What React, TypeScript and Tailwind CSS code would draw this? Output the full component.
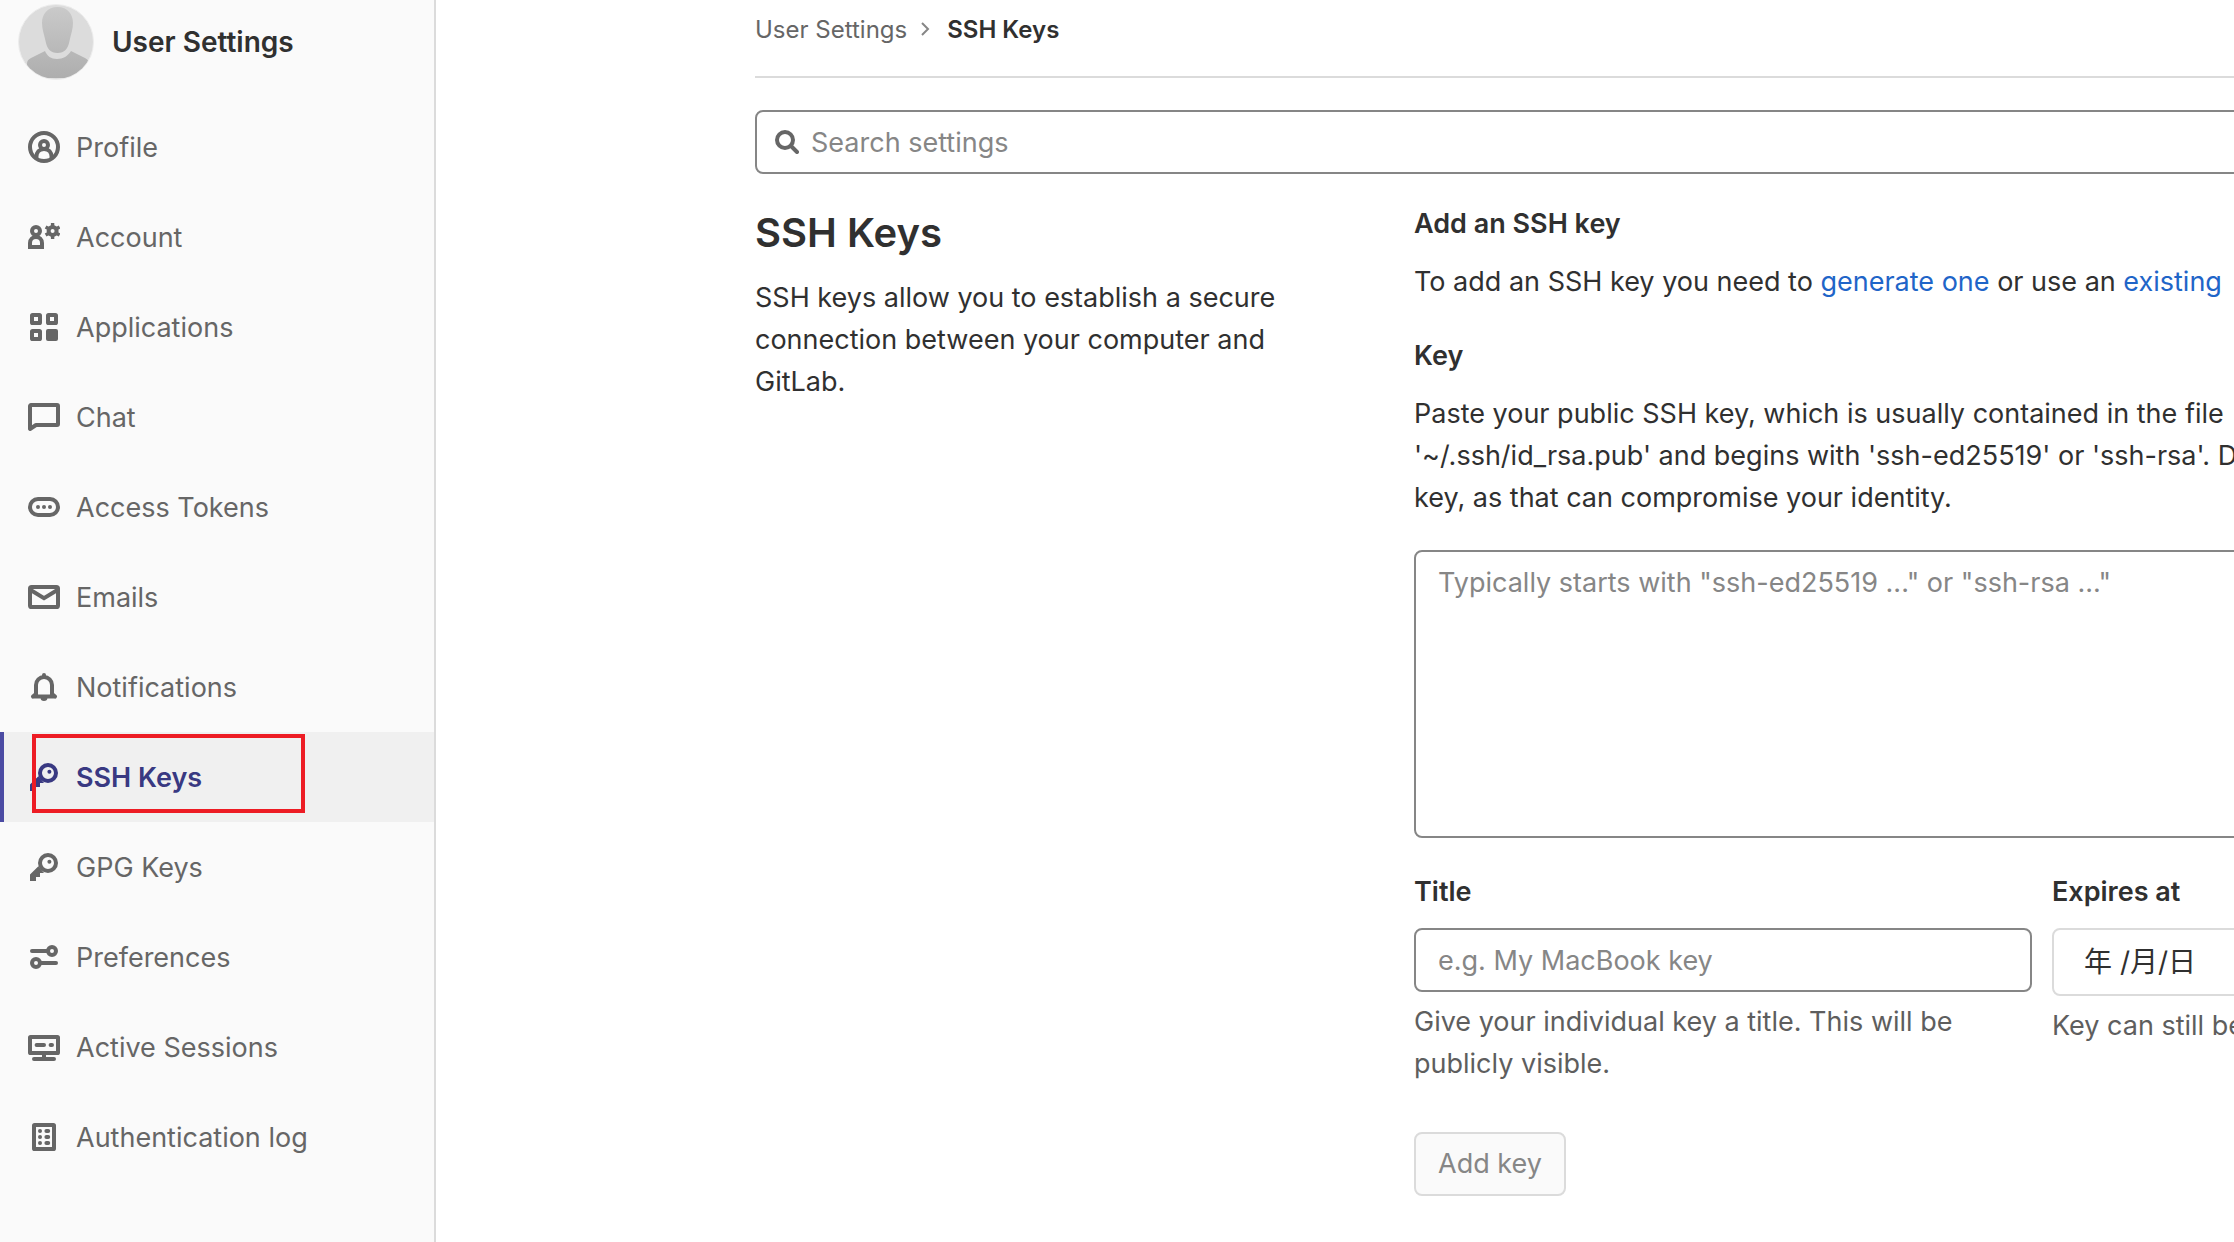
import type { ReactNode } from "react";

function Icon({ children }: { children: ReactNode }) {
  return (
    <svg viewBox="0 0 16 16" className="size-8 shrink-0" fill="none" stroke="currentColor" strokeWidth="2" aria-hidden="true">
      {children}
    </svg>
  );
}

const solid = { fill: "currentColor", stroke: "none" };

const profile = (
  <Icon>
    <circle cx="8" cy="8" r="7" />
    <circle cx="8" cy="7" r="2" />
    <path d="M4.200 13.500V13c0-2.500 1.500-4 3.800-4s3.800 1.500 3.800 4v.5" />
  </Icon>
);

const account = (
  <Icon>
    <circle cx="4" cy="5" r="2" />
    <path d="M1 13v-2a3 3 0 0 1 6 0v2z" />
    <circle cx="12.300" cy="5" r="2" />
    <path
      d="M12.300 1v1.500M12.300 7.500V9M8.800 3l1.400.8M14.400 6.200l1.400.8M8.800 7l1.400-.8M14.400 3.800l1.400-.8"
      strokeWidth="1.700"
    />
  </Icon>
);

const applications = (
  <Icon>
    <rect x="2" y="2" width="4" height="4" rx="0.3" />
    <rect x="10" y="2" width="4" height="4" rx="0.3" />
    <rect x="2" y="10" width="4" height="4" rx="0.3" />
    <rect x="9" y="9" width="6" height="6" rx="1" {...solid} />
  </Icon>
);

const chat = (
  <Icon>
    <path d="M1 14V2.500A.5.5 0 0 1 1.500 2h13a.5.5 0 0 1 .5.5v9a.5.5 0 0 1-.5.5H4z" strokeLinejoin="round" />
  </Icon>
);

const token = (
  <Icon>
    <rect x="1" y="4" width="14" height="8" rx="4" />
    <circle cx="5" cy="8" r="1" {...solid} />
    <circle cx="8" cy="8" r="1" {...solid} />
    <circle cx="11" cy="8" r="1" {...solid} />
  </Icon>
);

const mail = (
  <Icon>
    <rect x="1" y="3" width="14" height="10" rx="0.8" />
    <path d="M1.500 4.600 8 8.600l6.500-4" />
  </Icon>
);

const bell = (
  <Icon>
    <path d="M4 12V7a4 4 0 0 1 8 0v5" />
    <path d="M2.500 12.800 4 11.500M13.500 12.800 12 11.500M2.500 12.800h11" strokeLinecap="round" />
    <path d="M7 2.500V2a1 1 0 0 1 2 0v.5zM6.300 13.500h3.400a1.700 1.500 0 0 1-3.400 0z" {...solid} />
  </Icon>
);

const keyIcon = (
  <Icon>
    <circle cx="10" cy="6" r="4" />
    <circle cx="10.700" cy="5.400" r="1" {...solid} />
    <path d="M1 15h3v-2h2v-2h2L5.200 7.600 1 11.800z" {...solid} />
  </Icon>
);

const preferences = (
  <Icon>
    <circle cx="12" cy="5" r="2" />
    <circle cx="4" cy="11" r="2" />
    <path d="M2 5h8M6 11h8" strokeLinecap="round" />
  </Icon>
);

const sessions = (
  <Icon>
    <rect x="1" y="3" width="14" height="8" rx="0.3" />
    <path d="M4.300 7H8M11.300 7h.7M3 14h10" strokeLinecap="round" />
    <path d="M8 11v3" />
  </Icon>
);

const log = (
  <Icon>
    <rect x="3" y="2" width="10" height="12" rx="0.3" />
    <path d="M6 5h.01M6 8h.01M6 11h.01M9.200 5h.9M9.200 8h.9M9.200 11h.9" strokeLinecap="round" />
  </Icon>
);

const items: { label: string; icon: ReactNode; active?: boolean }[] = [
  { label: "Profile", icon: profile },
  { label: "Account", icon: account },
  { label: "Applications", icon: applications },
  { label: "Chat", icon: chat },
  { label: "Access Tokens", icon: token },
  { label: "Emails", icon: mail },
  { label: "Notifications", icon: bell },
  { label: "SSH Keys", icon: keyIcon, active: true },
  { label: "GPG Keys", icon: keyIcon },
  { label: "Preferences", icon: preferences },
  { label: "Active Sessions", icon: sessions },
  { label: "Authentication log", icon: log },
];

function Avatar() {
  return (
    <svg viewBox="0 0 76 76" className="size-[76px] shrink-0" role="img" aria-label="User avatar">
      <defs>
        <linearGradient id="figure" x1="0" y1="0" x2="0" y2="76" gradientUnits="userSpaceOnUse">
          <stop offset="0" stopColor="#cbcbcb" />
          <stop offset="1" stopColor="#adadad" />
        </linearGradient>
        <clipPath id="disc">
          <circle cx="38" cy="38" r="37" />
        </clipPath>
      </defs>
      <circle cx="38" cy="38" r="37.500" fill="#dcdcdc" stroke="#ededed" />
      <g clipPath="url(#disc)" fill="url(#figure)">
        <path d="M39.500 3c10 0 15.500 7 15.500 16 0 6-2 11-3.500 18C50 45 46.500 49 39.500 49S29 45 27.500 37C26 30 24 25 24 19c0-9 5.500-16 15.500-16z" />
        <path d="M27 47c2 5 6 8 12 8s11-3 14-8l14 7c3 1.500 4 3 4 6v14H9V60c0-3 1-4.500 4-6z" />
      </g>
    </svg>
  );
}

function Sidebar() {
  return (
    <aside className="w-[436px] shrink-0 border-r-2 border-[#dbdbdb] bg-[#fafafa]">
      <div className="flex h-[102px] items-start gap-[18px] pt-1 pl-[18px]">
        <Avatar />
        <span className="text-[28px] leading-[76px] font-semibold text-[#303030]">User Settings</span>
      </div>
      <nav aria-label="User settings">
        <ul>
          {items.map(({ label, icon, active }) => (
            <li key={label} className="relative">
              <a
                href="#"
                aria-current={active ? "page" : undefined}
                className={
                  active
                    ? "flex h-[90px] items-center gap-4 border-l-4 border-[#4b4ba3] bg-[#f0f0f0] pl-6 font-semibold text-[#393982]"
                    : "flex h-[90px] items-center gap-4 pl-7 text-[#666666]"
                }
              >
                {icon}
                <span className="pt-0.5">{label}</span>
              </a>
              {active && (
                <span className="pointer-events-none absolute top-0.5 left-8 h-[79px] w-[273px] border-4 border-[#ed1c24]" />
              )}
            </li>
          ))}
        </ul>
      </nav>
    </aside>
  );
}

export default function App() {
  return (
    <div className="flex min-h-screen overflow-hidden bg-white font-[Inter,'Noto_Sans_CJK_SC',sans-serif] text-[27px] leading-[42px] text-[#303030]">
      <Sidebar />
      <main className="min-w-0 flex-1 overflow-hidden pl-[319px]">
        <div className="min-w-[1940px]">
          <nav aria-label="Breadcrumb" className="flex h-[78px] items-start gap-3 border-b-2 border-[#dbdbdb] pt-[9px] text-[24px]">
            <a href="#" className="text-[#666666]">User Settings</a>
            <svg viewBox="0 0 12 16" className="mt-3 h-4 w-3" fill="none" stroke="#868686" strokeWidth="2" aria-hidden="true">
              <path d="M3 2l6 6-6 6" />
            </svg>
            <a href="#" className="ml-1 font-semibold">SSH Keys</a>
          </nav>

          <label className="mt-8 flex h-16 items-center gap-3 rounded-lg border-2 border-[#868686] px-[18px]">
            <svg viewBox="0 0 24 24" className="size-6 shrink-0" fill="none" stroke="#666666" strokeWidth="4" strokeLinecap="round" aria-hidden="true">
              <circle cx="10" cy="10" r="8" />
              <path d="M16 16l6 6" />
            </svg>
            <input type="search" aria-label="Search settings" placeholder="Search settings" className="flex-1 pt-0.5 outline-none placeholder:text-[#868686]" />
          </label>

          <div className="grid grid-cols-[659px_1fr]">
            <section className="pt-[35px] pr-[120px]">
              <h1 className="text-[40px] leading-[48px] font-semibold">SSH Keys</h1>
              <p className="mt-5">
                SSH keys allow you to establish a secure connection between your computer and GitLab.
              </p>
            </section>

            <form className="pt-[29px]">
              <h2 className="font-semibold">Add an SSH key</h2>
              <p className="mt-4">
                To add an SSH key you need to <a href="#" className="text-[#1f65c8]">generate one</a> or use an{" "}
                <a href="#" className="text-[#1f65c8]">existing</a>
              </p>
              <label htmlFor="key" className="mt-8 block font-semibold">Key</label>
              <p className="mt-4">
                Paste your public SSH key, which is usually contained in the file
                <br />
                '~/.ssh/id_rsa.pub' and begins with 'ssh-ed25519' or 'ssh-rsa'. Do not paste your private SSH
                <br />
                key, as that can compromise your identity.
              </p>
              <textarea
                id="key"
                placeholder={'Typically starts with "ssh-ed25519 ..." or "ssh-rsa ..."'}
                className="mt-[31px] block h-[288px] w-full resize-none rounded-lg border-2 border-[#868686] px-[22px] py-2.5 outline-none placeholder:text-[#868686]"
              />
              <div className="mt-[33px] grid grid-cols-[618px_1fr] gap-5">
                <div>
                  <label htmlFor="title" className="block font-semibold">Title</label>
                  <input
                    id="title"
                    type="text"
                    placeholder="e.g. My MacBook key"
                    className="mt-[15px] block h-16 w-full rounded-lg border-2 border-[#868686] px-[22px] outline-none placeholder:text-[#868686]"
                  />
                  <p className="mt-[9px] text-[#5e5e5e]">Give your individual key a title. This will be publicly visible.</p>
                </div>
                <div>
                  <label htmlFor="expires" className="block font-semibold">Expires at</label>
                  <input
                    id="expires"
                    type="text"
                    placeholder="年 /月/日"
                    className="mt-[15px] block h-[68px] w-full rounded-lg border-2 border-[#dbdbdb] px-[30px] text-[28px] outline-none placeholder:text-[#303030]"
                  />
                  <p className="mt-[9px] text-[#5e5e5e]">Key can still be used after expiration.</p>
                </div>
              </div>
              <button type="button" className="mt-[47px] h-16 rounded-lg border-2 border-[#dbdbdb] bg-[#fafafa] px-[22px] text-[#868686]">
                Add key
              </button>
            </form>
          </div>
        </div>
      </main>
    </div>
  );
}
